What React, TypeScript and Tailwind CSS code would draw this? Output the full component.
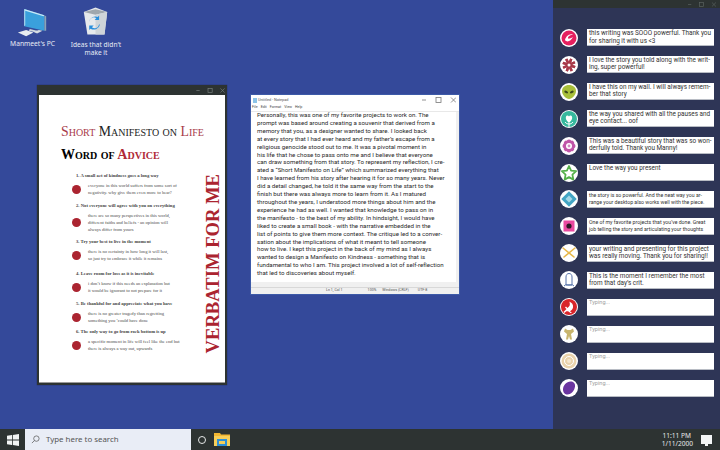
const notepadLines = [
  'Personally, this was one of my favorite projects to work on. The',
  'prompt was based around creating a souvenir that derived from a',
  'memory that you, as a designer wanted to share. I looked back',
  'at every story that I had ever heard and my father’s escape from a',
  'religious genocide stood out to me. It was a pivotal moment in',
  'his life that he chose to pass onto me and I believe that everyone',
  'can draw something from that story. To represent my reflection, I cre-',
  'ated a “Short Manifesto on Life” which summarized everything that',
  'I have learned from his story after hearing it for so many years. Never',
  'did a detail changed, he told it the same way from the start to the',
  'finish but there was always more to learn from it. As I matured',
  'throughout the years, I understood more things about him and the',
  'experience he had as well. I wanted that knowledge to pass on in',
  'the manifesto - to the best of my ability. In hindsight, I would have',
  'liked to create a small book - with the narrative embedded in the',
  'list of points to give them more context. The critique led to a conver-',
  'sation about the implications of what it meant to tell someone',
  'how to live. I kept this project in the back of my mind as I always',
  'wanted to design a Manifesto on Kindness - something that is',
  'fundamental to who I am. This project involved a lot of self-reflection',
  'that led to discoveries about myself.',
];

const advice = [
  { title: '1. A small act of kindness goes a long way', lines: ['everyone in this world suffers from some sort of', 'negativity. why give them even more to bear?'], mt: 'mt-0' },
  { title: '2. Not everyone will agree with you on everything', lines: ['there are so many perspectives in this world,', 'different faiths and beliefs - an opinion will', 'always differ from yours'], mt: 'mt-[6px]' },
  { title: '3. Try your best to live in the moment', lines: ['there is no certainty in how long it will last,', 'so just try to embrace it while it remains'], mt: 'mt-[5px]' },
  { title: '4. Leave room for loss as it is inevitable', lines: ['i don’t know if this needs an explanation but', 'it would be ignorant to not prepare for it'], mt: 'mt-[8px]' },
  { title: '5. Be thankful for and appreciate what you have', lines: ['there is no greater tragedy than regretting', 'something you ’could have done'], mt: 'mt-[6px]' },
  { title: '6. The only way to go from rock bottom is up', lines: ['a specific moment in life will feel like the end but', 'there is always a way out, upwards'], mt: 'mt-[4px]' },
];

function Avatar({ children }: { children: React.ReactNode }) {
  return (
    <div className="w-[18px] h-[18px] rounded-full bg-white shrink-0 overflow-hidden">
      <svg viewBox="0 0 18 18" className="w-full h-full">{children}</svg>
    </div>
  );
}

const petals = [0, 45, 90, 135, 180, 225, 270, 315];

const comments: { text: string[]; small?: boolean; typing?: boolean; icon: React.ReactNode }[] = [
  {
    text: ['this writing was SOOO powerful. Thank you', 'for sharing it with us <3'],
    icon: (
      <>
        <circle cx="9" cy="9" r="7.5" fill="#e6205f" />
        <path d="M5 11c1-4 4-6 8-6-2 1-5 2-5 4 0 1 2 1 5-1-2 4-6 6-8 3z" fill="#fff" />
      </>
    ),
  },
  {
    text: ['I love the story you told along with the writ-', 'ing, super powerful!'],
    icon: (
      <>
        {petals.map((a) => (
          <rect key={a} x="7.8" y="2.5" width="2.4" height="13" fill="#a83a4a" transform={`rotate(${a + 20} 9 9)`} />
        ))}
        <circle cx="9" cy="9" r="1.5" fill="#fff" />
      </>
    ),
  },
  {
    text: ['I have this on my wall. I will always remem-', 'ber that story'],
    icon: (
      <>
        <path d="M9 2c4 0 7 2.500 7 6 0 4-4 8-7 8s-7-4-7-8c0-3.500 3-6 7-6z" fill="#a8bf3a" />
        <ellipse cx="6.2" cy="9" rx="2" ry="1.200" fill="#3d4a1c" transform="rotate(25 6.200 9)" />
        <ellipse cx="11.800" cy="9" rx="2" ry="1.200" fill="#3d4a1c" transform="rotate(-25 11.800 9)" />
      </>
    ),
  },
  {
    text: ['the way you shared with all the pauses and', 'eye contact... oof'],
    icon: (
      <>
        <circle cx="9" cy="9" r="8" fill="#37b89e" />
        <path d="M9 13C6 10 5.500 8.500 6 6.500c.6-1.500 2.300-1.500 3 0 .7-1.500 2.400-1.500 3 0 .5 2-.1 3.500-3 6.500z" fill="#fff" />
        <path d="M9 13v4M9 14c-1.500 0-3-.5-4-2M9 14c1.500 0 3-.5 4-2" stroke="#fff" strokeWidth="1" fill="none" />
      </>
    ),
  },
  {
    text: ['This was a beautiful story that was so won-', 'derfully told. Thank you Manny!'],
    icon: (
      <>
        {petals.map((a) => (
          <circle key={a} cx="9" cy="4.800" r="2.300" fill="#c055a8" transform={`rotate(${a} 9 9)`} />
        ))}
        <circle cx="9" cy="9" r="3" fill="#fff" />
        <circle cx="9" cy="9" r="1.400" fill="#d58ac4" />
      </>
    ),
  },
  {
    text: ['Love the way you present'],
    icon: (
      <path
        d="M9 2l2.100 4.600 5 .6-3.700 3.400 1 5L9 13.100l-4.400 2.500 1-5-3.700-3.400 5-.6z"
        fill="#fff"
        stroke="#55b04a"
        strokeWidth="1.800"
        strokeLinejoin="round"
      />
    ),
  },
  {
    small: true,
    text: ['the story is so powerful. And the neat way you ar-', 'range your desktop also works well with the piece.'],
    icon: (
      <>
        <rect x="3.500" y="3.500" width="11" height="11" fill="#43a5c4" transform="rotate(45 9 9)" />
        <rect x="6.500" y="6.500" width="5" height="5" fill="#a5d8e6" transform="rotate(45 9 9)" />
      </>
    ),
  },
  {
    small: true,
    text: ['One of my favorite projects that you’ve done. Great', 'job telling the story and articulating your thoughts'],
    icon: (
      <>
        <rect x="3.500" y="3.500" width="11" height="11" fill="#ea4aa0" />
        <circle cx="9" cy="9" r="2.600" fill="#2a1a24" />
      </>
    ),
  },
  {
    text: ['your writing and presenting for this project', 'was really moving. Thank you for sharing!!'],
    icon: (
      <path d="M3 4l11 9M15 4L4 13" stroke="#e8b84a" strokeWidth="1.600" fill="none" strokeLinecap="round" />
    ),
  },
  {
    text: ['This is the moment I remember the most', 'from that day’s crit.'],
    icon: (
      <>
        <path d="M6 14V6c0-2 1-3.500 3-3.500S12 4 12 6v8z" fill="none" stroke="#5470a8" strokeWidth="1" />
        <path d="M4 15c2-2 3-1 5-1s3-1 5 1" fill="none" stroke="#5470a8" strokeWidth="1" />
      </>
    ),
  },
  {
    typing: true,
    text: ['Typing...'],
    icon: (
      <>
        <circle cx="9" cy="9" r="8" fill="#d9252a" />
        <path d="M9 3.500c3 .8 4.500 3.500 4 6-.4 1.800-1.500 3-3 3.800L12 15h-1.500l-2-1.400C7 13 6 13 4.500 15L3.500 14l3-3L5 9.500l1-1 1.500 1.500 1.500-1.500c1-1 1-2.500.5-4.500z" fill="#fff" />
      </>
    ),
  },
  {
    typing: true,
    text: ['Typing...'],
    icon: <path d="M5 3.500l2.500 1.500h3L13 3.500l1 3-3 2.500 1 5.500H10L9 11l-1 3.500H6l1-5.500-3-2.500z" fill="#c9b56e" />,
  },
  {
    typing: true,
    text: ['Typing...'],
    icon: (
      <>
        <circle cx="9" cy="9" r="7.500" fill="#ead3ac" />
        <circle cx="9" cy="9" r="4.500" fill="none" stroke="#fff" strokeWidth="1" />
        <circle cx="9" cy="9" r="2" fill="#f6e8d0" />
      </>
    ),
  },
  {
    typing: true,
    text: ['Typing...'],
    icon: (
      <path d="M3 10.500C3 6.500 6.500 2.500 10.500 2.500c3 0 5 2 4.500 5-.5 4-3.500 8-7.500 8C5 15.500 3 13.500 3 10.500z" fill="#6a35a0" />
    ),
  },
];

function PcIcon() {
  return (
    <svg viewBox="0 0 34 34" className="w-[31px] h-[31px]">
      <path d="M8 1l22 7v17L8 20z" fill="#3aa0dc" />
      <path d="M8 1l22 7-1 1L9 3v16l-1 1z" fill="#c9e8f6" />
      <path d="M30 8l2 1v16h-2z" fill="#8aa5b8" />
      <path d="M14 23l8 2-1 2-8-2z" fill="#cfd8de" />
      <path d="M1 27l9-3 8 3-8 4z" fill="#e8edf0" />
      <path d="M18 26l6-2 4 1-6 3z" fill="#d6dde2" />
    </svg>
  );
}

function BinIcon() {
  return (
    <svg viewBox="0 0 30 32" className="w-[27px] h-[30px] -ml-[2px]">
      <path d="M2 6L15 1l13 5-3 25H6z" fill="#e6e9ec" />
      <path d="M2 6l13-3 13 3-13 3z" fill="#9fa7ad" />
      <path d="M15 9l13-3-3 25H15z" fill="#cfd4d8" />
      <path d="M8 17a5 5 0 0 1 8-4l-2 2h5v-5l-1.500 1.500A7 7 0 0 0 8 17z" fill="#2a8fdc" />
      <path d="M19 20a5 5 0 0 1-8 3l2-2H8v5l1.500-1.500A7 7 0 0 0 20 20z" fill="#2a8fdc" />
    </svg>
  );
}

function WindowControls({ tone, size }: { tone: string; size: string }) {
  return (
    <svg viewBox="0 0 34 6" className={size} fill="none" stroke={tone} strokeWidth="0.8">
      <path d="M0 3h4" />
      <rect x="14" y="0.500" width="5" height="5" />
      <path d="M29 0.500l5 5M34 0.500l-5 5" />
    </svg>
  );
}

function ManifestoWindow() {
  return (
    <div className="absolute left-[37px] top-[85px] w-[190px] h-[300px] bg-[#2d3332] flex flex-col px-[2px] pb-[2px] shadow-[0_0_1px_#1a1f40]">
      <div className="h-[10px] shrink-0 flex items-center justify-end">
        <WindowControls tone="#79807e" size="w-[29px] h-[5px]" />
      </div>
      <div className="flex-1 bg-white border-b border-[#9a9a9a] flex pl-[22px] pr-[3px] min-h-0" style={{ fontFamily: '"Liberation Serif", serif' }}>
        <div className="w-[141px] shrink-0">
          <div className="mt-[28px] text-[13.8px] leading-[18px] whitespace-nowrap [font-variant:small-caps] text-[#222]">
            <span className="text-[#a83a4a]">Short </span>Manifesto on <span className="text-[#a83a4a]">Life</span>
          </div>
          <div className="mt-[5px] text-[14px] leading-[18px] font-bold whitespace-nowrap [font-variant:small-caps] text-black">
            Word of <span className="text-[#b02a37]">Advice</span>
          </div>
          <div className="mt-[8px] flex flex-col">
            {advice.map((item) => (
              <div key={item.title} className={item.mt}>
                <div className="pl-[15px] text-[4.7px] leading-[7px] font-bold text-[#444] whitespace-nowrap">{item.title}</div>
                <div className="mt-[3px] flex items-center">
                  <div className="w-[9px] h-[9px] rounded-full bg-[#ab2430] ml-[11px] shrink-0" />
                  <div className="ml-[7px] text-[4.6px] leading-[7px] text-[#4a4a4a] whitespace-nowrap">
                    {item.lines.map((l) => (
                      <div key={l}>{l}</div>
                    ))}
                  </div>
                </div>
              </div>
            ))}
          </div>
        </div>
        <div className="flex-1 flex justify-end items-end pb-[29px] pr-[1px]">
          <div className="[writing-mode:vertical-rl] rotate-180 text-[18.6px] leading-[16px] font-bold text-[#ab2430] whitespace-nowrap">
            VERBATIM FOR ME
          </div>
        </div>
      </div>
    </div>
  );
}

function NotepadWindow() {
  return (
    <div className="absolute left-[250px] top-[94px] w-[210px] h-[201px] bg-white border border-[#3d5aa8] flex flex-col" style={{ fontFamily: 'Roboto, sans-serif' }}>
      <div className="h-[10px] shrink-0 flex items-center justify-between pl-[2px] pr-[3px]">
        <div className="flex items-center gap-[1px]">
          <div className="w-[4px] h-[5px] bg-[#8cc4e8]" />
          <span className="text-[3.8px] text-[#555]">Untitled - Notepad</span>
        </div>
        <WindowControls tone="#777" size="w-[34px] h-[6px]" />
      </div>
      <div className="h-[6px] shrink-0 flex items-center gap-[3px] pl-[1px] text-[3.6px] text-[#444]">
        <span>File</span>
        <span>Edit</span>
        <span>Format</span>
        <span>View</span>
        <span>Help</span>
      </div>
      <div className="flex-1 flex min-h-0 border-t border-[#e8e8e8]">
        <div className="flex-1 pl-[6px] text-[6.15px] leading-[7.9px] text-[#2a2a2a] whitespace-nowrap overflow-hidden">
          {notepadLines.map((l) => (
            <div key={l}>{l}</div>
          ))}
        </div>
        <div className="w-[3px] bg-[#f0f0f0]" />
      </div>
      <div className="h-[5px] shrink-0 bg-[#f0f0f0]" />
      <div className="h-[7px] shrink-0 bg-[#f0f0f0] border-t border-[#d8d8d8] flex items-center text-[3.6px] text-[#555]">
        <span className="ml-[75px]">Ln 1, Col 1</span>
        <span className="ml-[25px]">100%</span>
        <span className="ml-[6px]">Windows (CRLF)</span>
        <span className="ml-[9px]">UTF-8</span>
      </div>
    </div>
  );
}

function CommentsPanel() {
  return (
    <div className="w-[167px] shrink-0 bg-[#2e3556] flex flex-col" style={{ fontFamily: 'Roboto, sans-serif' }}>
      <div className="h-[8px] bg-[#2d3332] shrink-0 flex items-center justify-end pr-[4px]">
        <WindowControls tone="#5c6462" size="w-[28px] h-[5px]" />
      </div>
      <div className="pt-[21px] pl-[7px] pr-[6px] flex flex-col gap-[9.85px]">
        {comments.map((c, i) => (
          <div key={i} className="flex items-center gap-[9px] h-[17.15px]">
            <Avatar>{c.icon}</Avatar>
            <div
              className={
                'flex-1 h-full bg-white px-[2px] whitespace-nowrap overflow-hidden border-b border-[#b8bcc4] ' +
                (c.typing
                  ? 'text-[5.6px] leading-[7.5px] text-[#a0a0a0]'
                  : c.small
                    ? 'text-[5.2px] leading-[6.5px] pt-[1.5px] text-[#333]'
                    : 'text-[6.4px] leading-[7.5px] pt-[1px] text-[#333]')
              }
            >
              {c.text.map((t) => (
                <div key={t}>{t}</div>
              ))}
            </div>
          </div>
        ))}
      </div>
    </div>
  );
}

function Taskbar() {
  return (
    <div className="h-[21px] shrink-0 bg-[#2d3332] flex items-center" style={{ fontFamily: '"Noto Sans", sans-serif' }}>
      <div className="w-[25px] flex justify-center">
        <svg viewBox="0 0 12 12" className="w-[12px] h-[12px]" fill="#f2f4f4">
          <path d="M0 1.800l5-.8v4.600H0zM5.800 .9L12 0v5.600H5.800zM0 6.400h5V11l-5-.8zM5.800 6.400H12V12l-6.200-.9z" />
        </svg>
      </div>
      <div className="w-[166px] h-full bg-[#e9edf6] flex items-center pl-[6px] gap-[6px]">
        <svg viewBox="0 0 10 10" className="w-[9px] h-[9px]" fill="none" stroke="#555" strokeWidth="0.8">
          <circle cx="6" cy="4" r="3" />
          <path d="M3.800 6.200L1 9" />
        </svg>
        <span className="text-[7.9px] text-[#555] whitespace-nowrap">Type here to search</span>
      </div>
      <div className="ml-[7px] w-[8px] h-[8px] rounded-full border border-[#e6e8e8]" />
      <svg viewBox="0 0 16 13" className="ml-[8px] w-[16px] h-[13px]">
        <path d="M0 0h6l1 1.500h9V13H0z" fill="#f2b632" />
        <rect x="0" y="3" width="16" height="10" fill="#f7cf5a" />
        <rect x="3" y="6" width="10" height="7" fill="#2e8fd6" />
        <rect x="5" y="8" width="6" height="3" fill="#f7cf5a" />
      </svg>
      <div className="ml-auto flex items-center">
        <div className="text-right text-[6.6px] leading-[8px] text-[#e6e8e8] whitespace-nowrap">
          <div className="pr-[2px]">11:11 PM</div>
          <div>1/11/2000</div>
        </div>
        <div className="ml-[8px] mr-[8px] relative w-[11px] h-[9px] bg-[#f4f6f6]">
          <div className="absolute left-[4px] -bottom-[2px] w-[3px] h-[2px] bg-[#f4f6f6]" />
        </div>
      </div>
    </div>
  );
}

export default function App() {
  return (
    <div className="w-[720px] h-[450px] overflow-hidden flex flex-col bg-[#34499a]">
      <div className="flex-1 flex min-h-0">
        <div className="flex-1 relative" style={{ fontFamily: '"Noto Sans", sans-serif' }}>
          <div className="absolute left-[10px] top-[8px] w-[45px] flex flex-col items-center text-[6.7px] leading-[8px] text-[#e8ebf5]">
            <PcIcon />
            <span className="mt-[1px] whitespace-nowrap">Manmeet's PC</span>
          </div>
          <div className="absolute left-[68px] top-[6px] w-[56px] flex flex-col items-center text-[6.6px] leading-[8px] text-[#e8ebf5] text-center">
            <BinIcon />
            <span className="mt-[5px] whitespace-nowrap">Ideas that didn't<br />make it</span>
          </div>
          <ManifestoWindow />
          <NotepadWindow />
        </div>
        <CommentsPanel />
      </div>
      <Taskbar />
    </div>
  );
}
